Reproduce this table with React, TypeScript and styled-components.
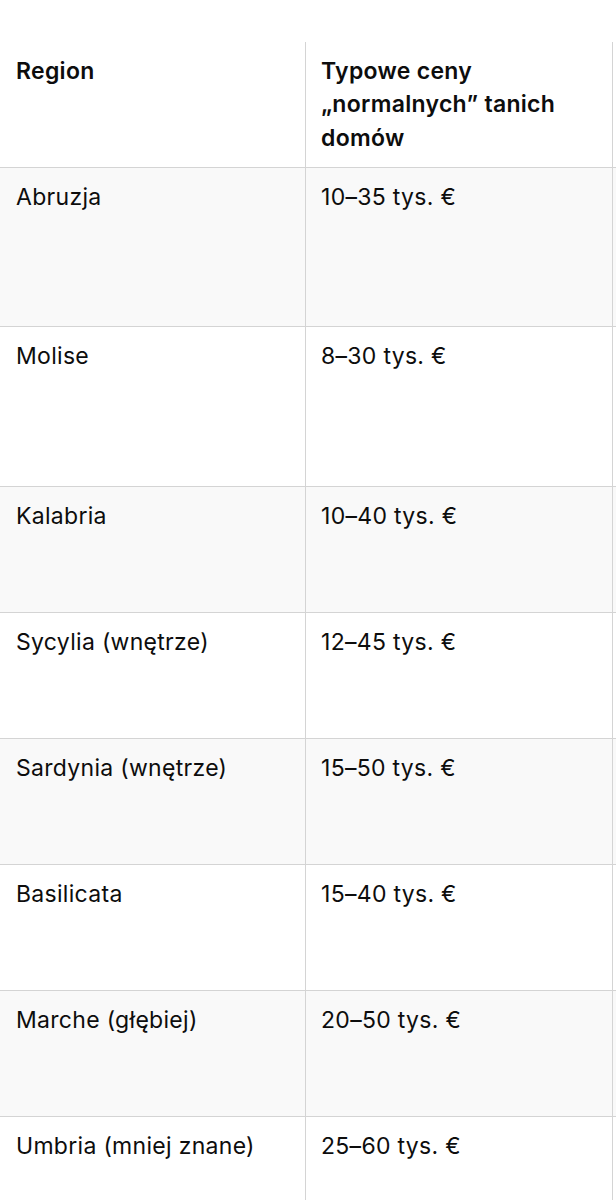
import React from "react";
import styled, { createGlobalStyle } from "styled-components";

const GlobalStyle = createGlobalStyle`
  html, body {
    margin: 0;
    padding: 0;
    background: #ffffff;
    overflow: hidden;
  }
  body {
    font-family: Inter, "Noto Sans", "Liberation Sans", sans-serif;
    color: #0d0d0d;
    -webkit-font-smoothing: antialiased;
  }
`;

const Page = styled.div`
  width: 616px;
  overflow: hidden;
  padding-top: 42px;
`;

const Table = styled.div`
  width: 952px;
  display: flex;
  flex-direction: column;
`;

const Row = styled.div<{ $shade?: boolean; $head?: boolean }>`
  display: grid;
  grid-template-columns: 305px 307px 340px;
  border-bottom: 1px solid #d4d4d4;
  background: ${(p) => (p.$shade ? "#f9f9f9" : "#ffffff")};
  & > div {
    padding-top: 13px;
    padding-bottom: 12px;
  }
`;

const Cell = styled.div<{ $head?: boolean; $first?: boolean }>`
  padding-left: ${(p) => (p.$first ? "16px" : "15px")};
  padding-right: 16px;
  border-left: ${(p) => (p.$first ? "none" : "1px solid #d4d4d4")};
  font-size: 23px;
  line-height: 33.33px;
  font-weight: ${(p) => (p.$head ? 600 : 400)};
  letter-spacing: 0.3px;
  white-space: nowrap;
`;

const Line = styled.span`
  display: block;
`;

type RowData = { region: string; price: string; notes: string[] };

const head = {
  region: "Region",
  price: ["Typowe ceny", "„normalnych” tanich", "domów"],
  notes: ["Co zwykle", "dostajesz za", "te pieniądze"],
};

const rows: RowData[] = [
  { region: "Abruzja", price: "10–35 tys. €", notes: ["Kamienne domy", "w górskich", "wioskach, często", "do remontu"] },
  { region: "Molise", price: "8–30 tys. €", notes: ["Najtańszy region,", "małe miasteczka,", "wyludnione", "wsie"] },
  { region: "Kalabria", price: "10–40 tys. €", notes: ["Domy blisko", "morza i w", "interiorze"] },
  { region: "Sycylia (wnętrze)", price: "12–45 tys. €", notes: ["Stare domy", "w centrach", "miasteczek"] },
  { region: "Sardynia (wnętrze)", price: "15–50 tys. €", notes: ["Spokojne wsie,", "dużo ziemi", "w cenie"] },
  { region: "Basilicata", price: "15–40 tys. €", notes: ["Domy z", "widokiem, do", "odświeżenia"] },
  { region: "Marche (głębiej)", price: "20–50 tys. €", notes: ["Domy w", "dobrym stanie,", "mniej turystów"] },
  { region: "Umbria (mniej znane)", price: "25–60 tys. €", notes: ["Kamienne domy", "na wzgórzach,", "blisko Toskanii"] },
];

export default function App() {
  return (
    <>
      <GlobalStyle />
      <Page>
        <Table>
          <Row $head>
            <Cell $head $first>{head.region}</Cell>
            <Cell $head>
              {head.price.map((l) => (
                <Line key={l}>{l}</Line>
              ))}
            </Cell>
            <Cell $head>
              {head.notes.map((l) => (
                <Line key={l}>{l}</Line>
              ))}
            </Cell>
          </Row>
          {rows.map((r, i) => (
            <Row key={r.region} $shade={i % 2 === 0}>
              <Cell $first>{r.region}</Cell>
              <Cell>{r.price}</Cell>
              <Cell>
                {r.notes.map((l) => (
                  <Line key={l}>{l}</Line>
                ))}
              </Cell>
            </Row>
          ))}
        </Table>
      </Page>
    </>
  );
}
